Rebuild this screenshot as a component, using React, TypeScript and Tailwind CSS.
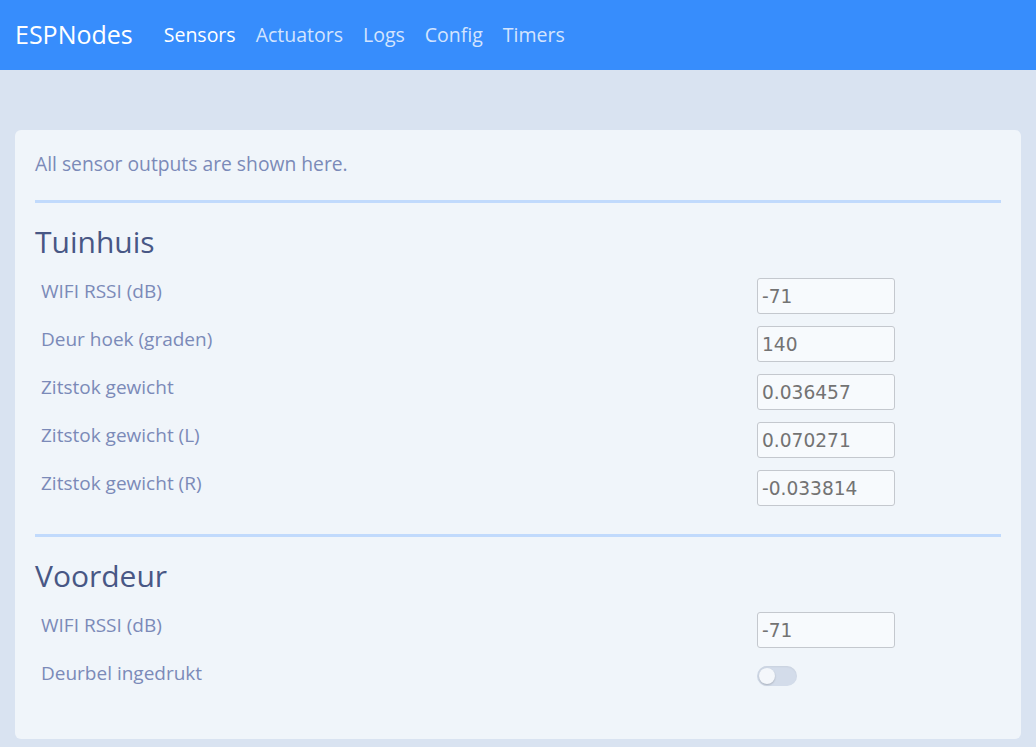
import React from 'react';

type Row = { label: string; value?: string; toggle?: boolean };

const sections: { title: string; rows: Row[] }[] = [
  {
    title: 'Tuinhuis',
    rows: [
      { label: 'WIFI RSSI (dB)', value: '-71' },
      { label: 'Deur hoek (graden)', value: '140' },
      { label: 'Zitstok gewicht', value: '0.036457' },
      { label: 'Zitstok gewicht (L)', value: '0.070271' },
      { label: 'Zitstok gewicht (R)', value: '-0.033814' },
    ],
  },
  {
    title: 'Voordeur',
    rows: [
      { label: 'WIFI RSSI (dB)', value: '-71' },
      { label: 'Deurbel ingedrukt', toggle: true },
    ],
  },
];

const navLinks = ['Sensors', 'Actuators', 'Logs', 'Config', 'Timers'];

const App: React.FC = () => {
  return (
    <div className="min-h-[747px] bg-[#d9e3f1] font-['Open_Sans','Noto_Sans',sans-serif] pb-[8px]">
      {/* Navbar */}
      <nav className="h-[70px] bg-[#378dfc] flex items-center px-[15px]">
        <span className="text-white text-[25px] mr-[21px]">ESPNodes</span>
        <div className="flex items-center">
          {navLinks.map((l, i) => (
            <a
              key={l}
              className={`px-[10px] text-[19.5px] ${i === 0 ? 'text-white' : 'text-[#d3e4fe]'}`}
            >
              {l}
            </a>
          ))}
        </div>
      </nav>

      {/* Card */}
      <div className="mx-[15px] mt-[60px] bg-[#f0f5fa] rounded-[6px] px-[20px] pt-[20px] pb-[35px] text-[#7b8ab8]">
        <p className="text-[19.3px] leading-[27px]">All sensor outputs are shown here.</p>

        {sections.map((s, si) => (
          <div key={s.title} className={si === 0 ? 'mt-[23px]' : 'mt-[20px]'}>
            <div className="h-[3px] bg-[#c1dafc]" />
            <h2 className="text-[30px] leading-[38px] text-[#485785] mt-[20px] mb-[13px]">{s.title}</h2>
            <div className="flex flex-col">
              {s.rows.map((r) => (
                <div key={r.label} className="h-[48px] flex items-start pt-[4px] pl-[6px]">
                  <span className="text-[19px] leading-[27px] w-[716px]">{r.label}</span>
                  {r.toggle ? (
                    <div className="mt-[6px] w-[40px] h-[20px] rounded-full bg-[#d3dcea] relative shadow-[inset_0_1px_2px_rgba(0,0,0,0.05)]">
                      <div className="absolute left-[2px] top-[2px] w-[16px] h-[16px] rounded-full bg-[#f4f7fb] shadow-[0_1px_2px_rgba(0,0,0,0.2)]" />
                    </div>
                  ) : (
                    <input
                      readOnly
                      value={r.value}
                      className="w-[138px] h-[36px] border border-[#c4c8ce] rounded-[3px] bg-[#f7fafd] px-[4px] text-[18.6px] text-[#737373] font-['DejaVu_Sans',sans-serif] outline-none"
                    />
                  )}
                </div>
              ))}
            </div>
          </div>
        ))}
      </div>
    </div>
  );
};

export default App;
